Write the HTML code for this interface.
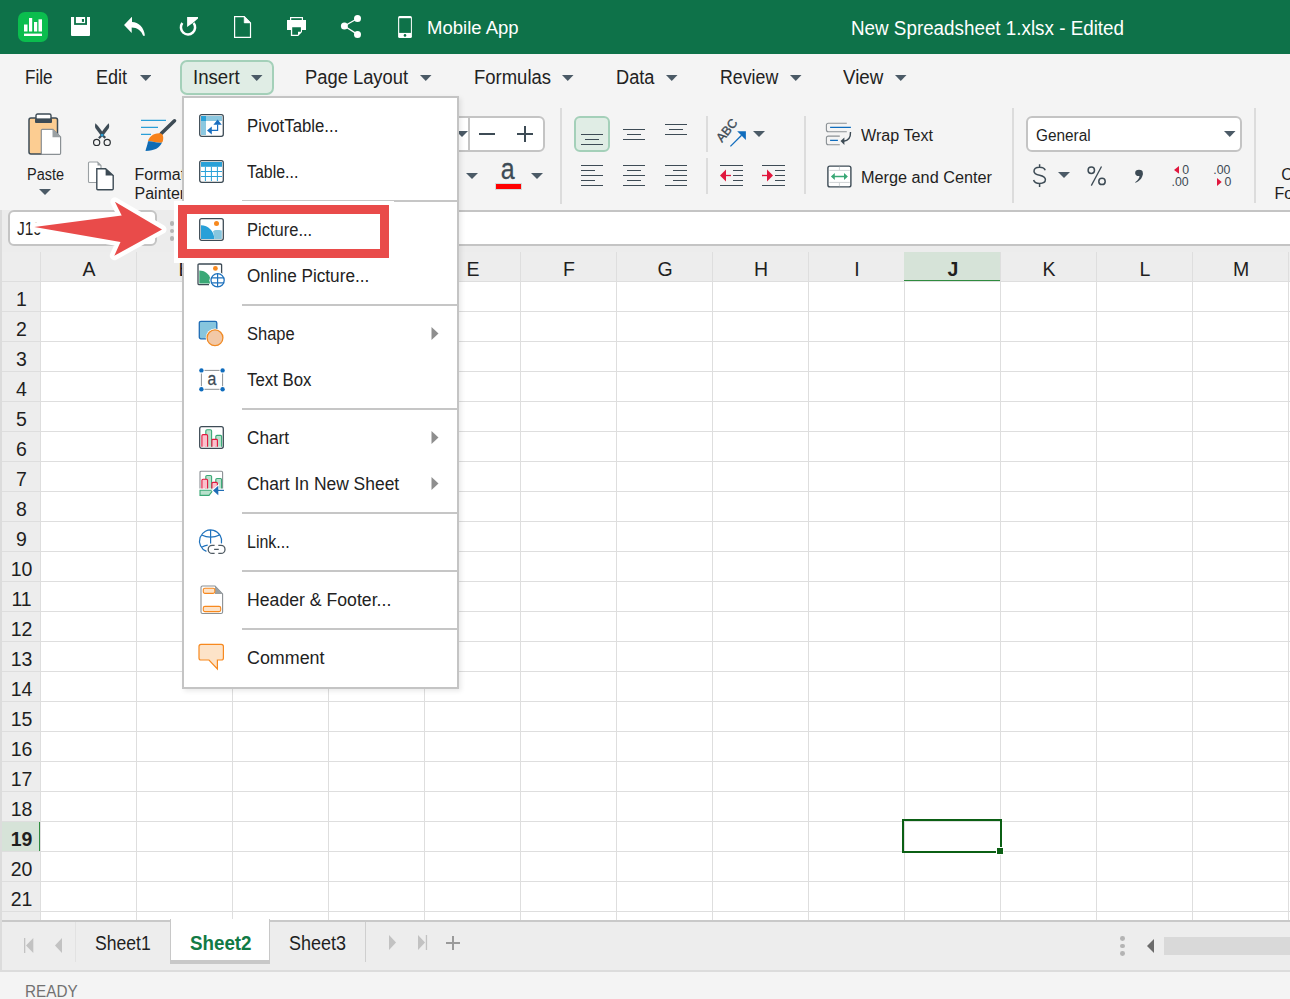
<!DOCTYPE html>
<html><head><meta charset="utf-8">
<style>
*{margin:0;padding:0;box-sizing:border-box}
html,body{width:1290px;height:999px;overflow:hidden;background:#f4f4f4;font-family:"Liberation Sans",sans-serif;color:#262626}
.a{position:absolute;display:block}
.t{position:absolute;white-space:nowrap;line-height:1;}
</style></head><body>
<div class="a" style="left:0px;top:0px;width:1290px;height:54px;background:#0e7249"></div>
<svg class="a" style="left:18px;top:12px;" width="30" height="30" viewBox="0 0 30 30"><rect x="0" y="0" width="30" height="30" rx="7" fill="#0bbd4e"/><rect x="6" y="12.5" width="3.5" height="7" fill="#fff"/><rect x="11" y="6" width="3.2" height="13.5" fill="#fff"/><rect x="16" y="10" width="3.2" height="9.5" fill="#fff"/><rect x="20.5" y="7.3" width="3.5" height="12.2" fill="#fff"/><rect x="6" y="21.6" width="18" height="2.4" fill="#fff"/></svg>
<svg class="a" style="left:71px;top:17px;" width="19" height="19" viewBox="0 0 19 19"><path d="M0 0H19V18Q19 19 18 19H1Q0 19 0 18Z" fill="#fff"/><rect x="3.1" y="0" width="12.9" height="7.9" fill="#0e7249"/><rect x="4.9" y="0" width="9.2" height="6.1" fill="#fff"/><rect x="10.9" y="2" width="2.1" height="2.9" fill="#0e7249"/></svg>
<svg class="a" style="left:120px;top:12px;" width="30" height="30" viewBox="0 0 30 30"><path d="M11.7 5L4.05 13.1L11.7 20.9V15.6C17 15.6 21.5 19 23.1 23.7H24.9C24.3 15.5 18.5 10 12 9.9V5Z" fill="#fff"/></svg>
<svg class="a" style="left:178px;top:16px;" width="21" height="21" viewBox="0 0 21 21"><path d="M4.33 7.03A7.1 7.1 0 1 0 15.62 6.97" fill="none" stroke="#fff" stroke-width="2.5"/><path d="M9.1 1.1H20V2.5L14.8 7L9.1 10.9Z" fill="#fff"/></svg>
<svg class="a" style="left:233px;top:15px;" width="19" height="23" viewBox="0 0 19 23"><path d="M1.6 1.6H11.2L17.5 7.9V22.4H1.6Z" fill="none" stroke="#fff" stroke-width="1.2"/><path d="M11.2 1.6V7.9H17.5Z" fill="#fff" stroke="#fff" stroke-width="0.6"/></svg>
<svg class="a" style="left:286px;top:16px;" width="21" height="21" viewBox="0 0 21 21"><rect x="4" y="1" width="13" height="3.2" fill="#fff"/><rect x="5.2" y="2.2" width="10.6" height="2" fill="#0e7249"/><rect x="1" y="4" width="19" height="10" fill="#fff"/><path d="M4.9 11H16V16L12.2 20H4.9Z" fill="#fff"/><path d="M6.2 11.2H14.9V15.8H12V18.8H6.2Z" fill="#0e7249"/></svg>
<svg class="a" style="left:340px;top:15px;" width="22" height="23" viewBox="0 0 22 23"><path d="M17.5 3.5L4.4 11L17.5 19.4" fill="none" stroke="#fff" stroke-width="1.3"/><circle cx="17.5" cy="3.5" r="3.5" fill="#fff"/><circle cx="4.4" cy="11" r="3.5" fill="#fff"/><circle cx="17.5" cy="19.4" r="3.5" fill="#fff"/></svg>
<svg class="a" style="left:397px;top:16px;" width="16" height="22" viewBox="0 0 16 22"><path d="M2.6 0H13.4Q14.9 0 14.9 1.5V20.5Q14.9 22 13.4 22H2.6Q1.1 22 1.1 20.5V1.5Q1.1 0 2.6 0Z" fill="#fff"/><rect x="2.2" y="2.2" width="11.7" height="14.7" fill="#0e7249"/><circle cx="8" cy="19.4" r="1.3" fill="#0e7249"/></svg>
<div class="t" style="left:426.8px;top:20.00px;font-size:17.5px;color:#fff;transform:scaleX(1.0579);transform-origin:0 0;">Mobile App</div>
<div class="t" style="left:851.4px;top:19.00px;font-size:19.5px;color:#fff;transform:scaleX(0.9650);transform-origin:0 0;">New Spreadsheet 1.xlsx - Edited</div>
<div class="a" style="left:180px;top:60px;width:94px;height:35px;background:#e0ede5;border:2px solid #a4d0b9;border-radius:7px"></div>
<div class="t" style="left:25.2px;top:67.00px;font-size:20px;color:#222;transform:scaleX(0.8564);transform-origin:0 0;">File</div>
<div class="t" style="left:96.3px;top:67.00px;font-size:20px;color:#222;transform:scaleX(0.8995);transform-origin:0 0;">Edit</div>
<svg class="a" style="left:139.55px;top:75px;" width="11.5" height="6" viewBox="0 0 11.5 6"><path d="M0 0H11.5L5.75 6Z" fill="#4b5a66"/></svg>
<div class="t" style="left:193.3px;top:67.00px;font-size:20px;color:#222;transform:scaleX(0.9316);transform-origin:0 0;">Insert</div>
<svg class="a" style="left:251.25px;top:75px;" width="11.5" height="6" viewBox="0 0 11.5 6"><path d="M0 0H11.5L5.75 6Z" fill="#4b5a66"/></svg>
<div class="t" style="left:305.2px;top:67.00px;font-size:20px;color:#222;transform:scaleX(0.9170);transform-origin:0 0;">Page Layout</div>
<svg class="a" style="left:420.05px;top:75px;" width="11.5" height="6" viewBox="0 0 11.5 6"><path d="M0 0H11.5L5.75 6Z" fill="#4b5a66"/></svg>
<div class="t" style="left:474px;top:67.00px;font-size:20px;color:#222;transform:scaleX(0.9238);transform-origin:0 0;">Formulas</div>
<svg class="a" style="left:562.45px;top:75px;" width="11.5" height="6" viewBox="0 0 11.5 6"><path d="M0 0H11.5L5.75 6Z" fill="#4b5a66"/></svg>
<div class="t" style="left:616px;top:67.00px;font-size:20px;color:#222;transform:scaleX(0.9089);transform-origin:0 0;">Data</div>
<svg class="a" style="left:666.05px;top:75px;" width="11.5" height="6" viewBox="0 0 11.5 6"><path d="M0 0H11.5L5.75 6Z" fill="#4b5a66"/></svg>
<div class="t" style="left:720.3px;top:67.00px;font-size:20px;color:#222;transform:scaleX(0.8875);transform-origin:0 0;">Review</div>
<svg class="a" style="left:790.15px;top:75px;" width="11.5" height="6" viewBox="0 0 11.5 6"><path d="M0 0H11.5L5.75 6Z" fill="#4b5a66"/></svg>
<div class="t" style="left:843.4px;top:67.00px;font-size:20px;color:#222;transform:scaleX(0.9374);transform-origin:0 0;">View</div>
<svg class="a" style="left:895.45px;top:75px;" width="11.5" height="6" viewBox="0 0 11.5 6"><path d="M0 0H11.5L5.75 6Z" fill="#4b5a66"/></svg>
<!--RIBBON-->
<svg class="a" style="left:28px;top:113px;" width="35" height="43" viewBox="0 0 35 43"><rect x="1" y="5" width="28.5" height="36" rx="2" fill="#fccd92" stroke="#3d4b55" stroke-width="1.5"/><rect x="8" y="1" width="15" height="5.5" rx="1.6" fill="#fff" stroke="#3d4b55" stroke-width="1.4"/><rect x="7" y="5.5" width="17" height="4.5" rx="1" fill="#3d4b55"/><path d="M14.3 16.3Q13.3 16.3 13.3 17.3V40.2Q13.3 41.3 14.3 41.3H31.6Q32.6 41.3 32.6 40.2V24L24.9 16.3Z" fill="#fff" stroke="#8a9094" stroke-width="1.2"/><path d="M24.5 16.3V24.3H32.6Z" fill="#9aa0a3"/></svg>
<div class="t" style="left:27px;top:167.00px;font-size:16px;color:#1f1f1f;transform:scaleX(0.9043);transform-origin:0 0;">Paste</div>
<svg class="a" style="left:39.0px;top:189px;" width="12" height="6" viewBox="0 0 12 6"><path d="M0 0H12L6.0 6Z" fill="#4b5a66"/></svg>
<svg class="a" style="left:92px;top:122px;" width="20" height="25" viewBox="0 0 20 25"><path d="M3.3 1.2Q5.5 2.5 11.5 11.5L9.2 14L3.3 6Q2.8 3.5 3.3 1.2Z" fill="#3d4b55"/><path d="M16.9 1.2Q14.7 2.5 8.7 11.5L11 14L16.9 6Q17.4 3.5 16.9 1.2Z" fill="#3d4b55"/><path d="M10.1 13L6.9 16.3M10.1 13L13.3 15.9" stroke="#3d4b55" stroke-width="2.2"/><circle cx="4.65" cy="20.4" r="3.1" fill="none" stroke="#2a2f33" stroke-width="1.2"/><circle cx="15.2" cy="20.4" r="3.1" fill="none" stroke="#2a2f33" stroke-width="1.2"/><rect x="8.8" y="11.9" width="2.6" height="2.4" fill="#2a9fd8"/></svg>
<svg class="a" style="left:87px;top:160.5px;" width="28" height="30" viewBox="0 0 28 30"><path d="M2.5 1H10.5L14 4.5V21.5H2.5Q1.5 21.5 1.5 20.5V2Q1.5 1 2.5 1Z" fill="#fff" stroke="#9aa0a3" stroke-width="1.1"/><path d="M10.5 1V4.5H14Z" fill="#9aa0a3"/><path d="M9.8 7.8H18.6L26.2 14.6V27.8Q26.2 28.8 25.2 28.8H10.8Q9.8 28.8 9.8 27.8Z" fill="#fff" stroke="#3d4b55" stroke-width="1.4"/><path d="M18.6 7.8V14.6H26.2Z" fill="#3d4b55"/></svg>
<svg class="a" style="left:140px;top:118px;" width="38" height="36" viewBox="0 0 38 36"><path d="M1 2.3H26M1 9.3H18M1 16.3H11" stroke="#2a9fd8" stroke-width="1.2"/><path d="M34.5 2.8L21.3 15.5" stroke="#3d4b55" stroke-width="3.6" stroke-linecap="round"/><path d="M20.2 15.2C24.5 15.5 23.5 23.5 22 24.5C17 25.5 11 22.5 8 23.5C8.5 19.5 13 14.8 20.2 15.2Z" fill="#f7821b"/><path d="M8 23.5C11 22.5 17 25.5 22 24.5C19.5 30 15 32.5 5.5 33C6 30 7.5 27 8 23.5Z" fill="#0f6cb5"/></svg>
<div class="t" style="left:134.5px;top:167.00px;font-size:16px;color:#1f1f1f;">Format</div>
<div class="t" style="left:134.5px;top:186.00px;font-size:16px;color:#1f1f1f;">Painter</div>
<div class="a" style="left:440px;top:116px;width:105px;height:36px;background:#fff;border:2px solid #c4c4c4;border-radius:6px"></div>
<div class="a" style="left:468.0px;top:118px;width:2px;height:32px;background:#c4c4c4"></div>
<svg class="a" style="left:456.0px;top:131px;" width="12" height="6" viewBox="0 0 12 6"><path d="M0 0H12L6.0 6Z" fill="#4b5a66"/></svg>
<div class="a" style="left:479px;top:132.9px;width:16px;height:1.7px;background:#3d4b55"></div>
<div class="a" style="left:517px;top:132.9px;width:16px;height:1.7px;background:#3d4b55"></div>
<div class="a" style="left:524.2px;top:126px;width:1.7px;height:16px;background:#3d4b55"></div>
<svg class="a" style="left:466.0px;top:173px;" width="12" height="6" viewBox="0 0 12 6"><path d="M0 0H12L6.0 6Z" fill="#4b5a66"/></svg>
<svg class="a" style="left:498px;top:158px;" width="22" height="23" viewBox="0 0 22 23"><text x="3.2" y="20.8" font-family="Liberation Sans" font-size="29" transform="scale(0.86 1)" fill="#3d4b55" stroke="#3d4b55" stroke-width="0.3">a</text></svg>
<div class="a" style="left:495px;top:183px;width:27px;height:7px;background:#ff0000;border:1px solid #d3dada"></div>
<svg class="a" style="left:531.0px;top:173px;" width="12" height="6" viewBox="0 0 12 6"><path d="M0 0H12L6.0 6Z" fill="#4b5a66"/></svg>
<div class="a" style="left:560.0px;top:108px;width:2px;height:96px;background:#dcdcdc"></div>
<div class="a" style="left:574px;top:116px;width:36px;height:36px;background:#e0ede5;border:2px solid #a4d0b9;border-radius:6px"></div>
<div class="a" style="left:581px;top:133.70000000000002px;width:22px;height:1.3px;background:#3d4b55"></div>
<div class="a" style="left:585px;top:138.8px;width:14px;height:1.3px;background:#3d4b55"></div>
<div class="a" style="left:581px;top:143.8px;width:22px;height:1.3px;background:#3d4b55"></div>
<div class="a" style="left:623px;top:128.8px;width:22px;height:1.3px;background:#3d4b55"></div>
<div class="a" style="left:627px;top:133.8px;width:14px;height:1.3px;background:#3d4b55"></div>
<div class="a" style="left:623px;top:138.8px;width:22px;height:1.3px;background:#3d4b55"></div>
<div class="a" style="left:665px;top:123.7px;width:22px;height:1.3px;background:#3d4b55"></div>
<div class="a" style="left:669px;top:128.8px;width:14px;height:1.3px;background:#3d4b55"></div>
<div class="a" style="left:665px;top:133.8px;width:22px;height:1.3px;background:#3d4b55"></div>
<div class="a" style="left:581px;top:164.70000000000002px;width:22px;height:1.3px;background:#3d4b55"></div>
<div class="a" style="left:581px;top:169.70000000000002px;width:14px;height:1.3px;background:#3d4b55"></div>
<div class="a" style="left:581px;top:174.70000000000002px;width:22px;height:1.3px;background:#3d4b55"></div>
<div class="a" style="left:581px;top:179.70000000000002px;width:14px;height:1.3px;background:#3d4b55"></div>
<div class="a" style="left:581px;top:184.70000000000002px;width:22px;height:1.3px;background:#3d4b55"></div>
<div class="a" style="left:623px;top:164.70000000000002px;width:22px;height:1.3px;background:#3d4b55"></div>
<div class="a" style="left:627px;top:169.70000000000002px;width:14px;height:1.3px;background:#3d4b55"></div>
<div class="a" style="left:623px;top:174.70000000000002px;width:22px;height:1.3px;background:#3d4b55"></div>
<div class="a" style="left:627px;top:179.70000000000002px;width:14px;height:1.3px;background:#3d4b55"></div>
<div class="a" style="left:623px;top:184.70000000000002px;width:22px;height:1.3px;background:#3d4b55"></div>
<div class="a" style="left:665px;top:164.70000000000002px;width:22px;height:1.3px;background:#3d4b55"></div>
<div class="a" style="left:673px;top:169.70000000000002px;width:14px;height:1.3px;background:#3d4b55"></div>
<div class="a" style="left:665px;top:174.70000000000002px;width:22px;height:1.3px;background:#3d4b55"></div>
<div class="a" style="left:673px;top:179.70000000000002px;width:14px;height:1.3px;background:#3d4b55"></div>
<div class="a" style="left:665px;top:184.70000000000002px;width:22px;height:1.3px;background:#3d4b55"></div>
<div class="a" style="left:706.0px;top:116px;width:2px;height:35.5px;background:#dcdcdc"></div>
<div class="a" style="left:706.0px;top:158px;width:2px;height:35.5px;background:#dcdcdc"></div>
<svg class="a" style="left:715px;top:117px;" width="34" height="32" viewBox="0 0 34 32"><text x="0" y="0" transform="translate(6.9 26) rotate(-51)" font-family="Liberation Sans" font-size="12.5" fill="#3d4b55" stroke="#3d4b55" stroke-width="0.35">ABC</text><path d="M15.4 29.4L26.6 18.2" stroke="#0f6cbd" stroke-width="1.3"/><path d="M22.2 14.3H30.9V22.9Z" fill="#0f6cbd"/></svg>
<svg class="a" style="left:753.0px;top:131px;" width="12" height="6" viewBox="0 0 12 6"><path d="M0 0H12L6.0 6Z" fill="#4b5a66"/></svg>
<div class="a" style="left:720px;top:164.7px;width:23px;height:1.3px;background:#3d4b55"></div>
<div class="a" style="left:720px;top:184.7px;width:23px;height:1.3px;background:#3d4b55"></div>
<div class="a" style="left:733px;top:169.7px;width:10px;height:1.3px;background:#3d4b55"></div>
<div class="a" style="left:733px;top:174.7px;width:10px;height:1.3px;background:#3d4b55"></div>
<div class="a" style="left:733px;top:179.7px;width:10px;height:1.3px;background:#3d4b55"></div>
<svg class="a" style="left:720px;top:169px;" width="12" height="13" viewBox="0 0 12 13"><path d="M0 6.5L6 0.5V12.5Z" fill="#e0173d"/><path d="M5 6.5H11" stroke="#e0173d" stroke-width="1.3"/></svg>
<div class="a" style="left:762px;top:164.7px;width:23px;height:1.3px;background:#3d4b55"></div>
<div class="a" style="left:762px;top:184.7px;width:23px;height:1.3px;background:#3d4b55"></div>
<div class="a" style="left:775px;top:169.7px;width:10px;height:1.3px;background:#3d4b55"></div>
<div class="a" style="left:775px;top:174.7px;width:10px;height:1.3px;background:#3d4b55"></div>
<div class="a" style="left:775px;top:179.7px;width:10px;height:1.3px;background:#3d4b55"></div>
<svg class="a" style="left:762px;top:169px;" width="12" height="13" viewBox="0 0 12 13"><path d="M11 6.5L5 0.5V12.5Z" fill="#e0173d"/><path d="M0 6.5H6" stroke="#e0173d" stroke-width="1.3"/></svg>
<div class="a" style="left:804.0px;top:116px;width:2px;height:77.5px;background:#dcdcdc"></div>
<svg class="a" style="left:825px;top:122px;" width="28" height="25" viewBox="0 0 28 25"><path d="M21.8 1.2H3.4Q1.4 1.2 1.4 3.2V7.7Q1.4 9.7 3.4 9.7H21.8" fill="none" stroke="#8a9094" stroke-width="1.1"/><path d="M14.8 14.1H3.4Q1.4 14.1 1.4 16.1V20.7Q1.4 22.7 3.4 22.7H14.8" fill="none" stroke="#8a9094" stroke-width="1.1"/><path d="M5.1 5.4H25.9M5.1 18.4H12.9" stroke="#0f6cbd" stroke-width="1.3"/><path d="M25.5 10.1Q25.8 18.8 18.5 19.3" fill="none" stroke="#3d4b55" stroke-width="1.4"/><path d="M15.5 19L19.4 15.4V22.9Z" fill="#3d4b55"/></svg>
<div class="t" style="left:860.7px;top:128.00px;font-size:16px;color:#1f1f1f;transform:scaleX(1.0079);transform-origin:0 0;">Wrap Text</div>
<svg class="a" style="left:826px;top:164px;" width="27" height="25" viewBox="0 0 27 25"><rect x="1.9" y="2.1" width="23" height="20.8" rx="2" fill="#fff" stroke="#3d4b55" stroke-width="1.4"/><path d="M3.4 6.4H23.8M3.4 18.4H23.8M13.4 2.8V6.4M13.4 18.4V22.2" stroke="#cfd3d5" stroke-width="1"/><path d="M7 12.5H20" stroke="#3aa876" stroke-width="1.5"/><path d="M4.9 12.5L8.8 9V16Z M21.9 12.5L18 9V16Z" fill="#3aa876"/></svg>
<div class="t" style="left:860.7px;top:170.00px;font-size:16px;color:#1f1f1f;transform:scaleX(1.0158);transform-origin:0 0;">Merge and Center</div>
<div class="a" style="left:1012.0px;top:108px;width:2px;height:95px;background:#dcdcdc"></div>
<div class="a" style="left:1026px;top:116px;width:216px;height:36px;background:#fff;border:2px solid #c4c4c4;border-radius:6px"></div>
<div class="t" style="left:1035.6px;top:128.00px;font-size:16px;color:#1f1f1f;transform:scaleX(0.9609);transform-origin:0 0;">General</div>
<svg class="a" style="left:1224.25px;top:131px;" width="11.5" height="6" viewBox="0 0 11.5 6"><path d="M0 0H11.5L5.75 6Z" fill="#4b5a66"/></svg>
<svg class="a" style="left:1030px;top:162px;" width="20" height="27" viewBox="0 0 20 27"><path d="M15.2 8.2C14.5 6 12.5 5.2 9.6 5.2C6.5 5.2 4 6.6 4 9.2C4 12 6.8 12.6 9.6 13.2C12.8 13.9 15.4 14.7 15.4 17.6C15.4 20.2 12.8 21.5 9.6 21.5C6.5 21.5 4.3 20.3 3.6 18M9.6 2.2V5.2M9.6 21.5V25" fill="none" stroke="#3d4b55" stroke-width="1.5"/></svg>
<svg class="a" style="left:1058.0px;top:172px;" width="12" height="6" viewBox="0 0 12 6"><path d="M0 0H12L6.0 6Z" fill="#4b5a66"/></svg>
<svg class="a" style="left:1085px;top:163px;" width="24" height="25" viewBox="0 0 24 25"><circle cx="6.3" cy="7.2" r="3.2" fill="none" stroke="#3d4b55" stroke-width="1.5"/><circle cx="17" cy="18.4" r="3.2" fill="none" stroke="#3d4b55" stroke-width="1.5"/><path d="M16.5 3.5L6.3 22.6" stroke="#3d4b55" stroke-width="1.3"/></svg>
<svg class="a" style="left:1132px;top:168px;" width="14" height="17" viewBox="0 0 14 17"><ellipse cx="7" cy="4.9" rx="3.85" ry="3.1" fill="#3d4b55"/><path d="M10.8 5C11 9 8.5 12.8 3.5 14.8L3.1 14.2C6 12.2 7.5 10 7.5 7.7Z" fill="#3d4b55"/></svg>
<svg class="a" style="left:1170px;top:162px;" width="24" height="28" viewBox="0 0 24 28"><path d="M4 7.9L9 4.1V11.7Z" fill="#e0173d"/><text x="12.8" y="12" font-family="Liberation Sans" font-size="13" fill="#3d4b55" transform="scale(0.95 1)" >0</text><text x="1.6" y="24" font-family="Liberation Sans" font-size="13" fill="#3d4b55" transform="scale(0.95 1)">.00</text></svg>
<svg class="a" style="left:1212px;top:162px;" width="24" height="28" viewBox="0 0 24 28"><text x="1.4" y="12" font-family="Liberation Sans" font-size="13" fill="#3d4b55" transform="scale(0.95 1)">.00</text><path d="M9.7 20L5 16V24Z" fill="#e0173d"/><text x="13.2" y="24" font-family="Liberation Sans" font-size="13" fill="#3d4b55" transform="scale(0.95 1)">0</text></svg>
<div class="a" style="left:1254.0px;top:108px;width:2px;height:95px;background:#dcdcdc"></div>
<div class="t" style="left:1281.3px;top:167.00px;font-size:16px;color:#1f1f1f;">Co</div>
<div class="t" style="left:1274.4px;top:186.00px;font-size:16px;color:#1f1f1f;">Fo</div>
<!--FORMULA BAR-->
<div class="a" style="left:0px;top:210px;width:1290px;height:42px;background:#ececec"></div>
<div class="a" style="left:183px;top:210px;width:1107px;height:36px;background:#fff;border-top:2px solid #c4c4c4;border-bottom:2px solid #c4c4c4"></div>
<div class="a" style="left:8px;top:210px;width:149px;height:36px;background:#fff;border:2px solid #c4c4c4;border-radius:6px"></div>
<div class="t" style="left:16.5px;top:220.00px;font-size:18px;color:#1f1f1f;transform:scaleX(0.8600);transform-origin:0 0;">J19</div>
<div class="a" style="left:170px;top:221.2px;width:4.4px;height:4.4px;border-radius:50%;background:#b4b4b4"></div>
<div class="a" style="left:170px;top:228.6px;width:4.4px;height:4.4px;border-radius:50%;background:#b4b4b4"></div>
<div class="a" style="left:170px;top:236.2px;width:4.4px;height:4.4px;border-radius:50%;background:#b4b4b4"></div>
<!--GRID-->
<div class="a" style="left:0px;top:252px;width:1290px;height:668px;background:#fff"></div>
<div class="a" style="left:0px;top:252px;width:1290px;height:30px;background:#ededed"></div>
<div class="a" style="left:2px;top:282px;width:38px;height:638px;background:#ededed"></div>
<div class="a" style="left:0px;top:210px;width:2px;height:761px;background:#dcdcdc"></div>
<svg class="a" style="left:0px;top:252px;" width="1290" height="668" viewBox="0 0 1290 668"><rect x="40" y="0" width="1" height="668" fill="#dedede"/><rect x="136" y="0" width="1" height="668" fill="#dedede"/><rect x="232" y="0" width="1" height="668" fill="#dedede"/><rect x="328" y="0" width="1" height="668" fill="#dedede"/><rect x="424" y="0" width="1" height="668" fill="#dedede"/><rect x="520" y="0" width="1" height="668" fill="#dedede"/><rect x="616" y="0" width="1" height="668" fill="#dedede"/><rect x="712" y="0" width="1" height="668" fill="#dedede"/><rect x="808" y="0" width="1" height="668" fill="#dedede"/><rect x="904" y="0" width="1" height="668" fill="#dedede"/><rect x="1000" y="0" width="1" height="668" fill="#dedede"/><rect x="1096" y="0" width="1" height="668" fill="#dedede"/><rect x="1192" y="0" width="1" height="668" fill="#dedede"/><rect x="1288" y="0" width="1" height="668" fill="#dedede"/><rect x="2" y="29" width="1288" height="1" fill="#dedede"/><rect x="2" y="59" width="1288" height="1" fill="#dedede"/><rect x="2" y="89" width="1288" height="1" fill="#dedede"/><rect x="2" y="119" width="1288" height="1" fill="#dedede"/><rect x="2" y="149" width="1288" height="1" fill="#dedede"/><rect x="2" y="179" width="1288" height="1" fill="#dedede"/><rect x="2" y="209" width="1288" height="1" fill="#dedede"/><rect x="2" y="239" width="1288" height="1" fill="#dedede"/><rect x="2" y="269" width="1288" height="1" fill="#dedede"/><rect x="2" y="299" width="1288" height="1" fill="#dedede"/><rect x="2" y="329" width="1288" height="1" fill="#dedede"/><rect x="2" y="359" width="1288" height="1" fill="#dedede"/><rect x="2" y="389" width="1288" height="1" fill="#dedede"/><rect x="2" y="419" width="1288" height="1" fill="#dedede"/><rect x="2" y="449" width="1288" height="1" fill="#dedede"/><rect x="2" y="479" width="1288" height="1" fill="#dedede"/><rect x="2" y="509" width="1288" height="1" fill="#dedede"/><rect x="2" y="539" width="1288" height="1" fill="#dedede"/><rect x="2" y="569" width="1288" height="1" fill="#dedede"/><rect x="2" y="599" width="1288" height="1" fill="#dedede"/><rect x="2" y="629" width="1288" height="1" fill="#dedede"/><rect x="2" y="659" width="1288" height="1" fill="#dedede"/></svg>
<div class="a" style="left:904px;top:252px;width:96px;height:29px;background:#d6e3d8;border-bottom:1.3px solid #2f8b3f"></div>
<div class="a" style="left:2px;top:822px;width:37px;height:29px;background:#d6e3d8"></div>
<div class="a" style="left:39px;top:822px;width:1.3px;height:29px;background:#2f8b3f"></div>
<div class="t" style="left:82.4964453125px;top:260.00px;font-size:19.5px;color:#1f1f1f;">A</div>
<div class="t" style="left:178.4964453125px;top:260.00px;font-size:19.5px;color:#1f1f1f;">B</div>
<div class="t" style="left:273.958671875px;top:260.00px;font-size:19.5px;color:#1f1f1f;">C</div>
<div class="t" style="left:369.958671875px;top:260.00px;font-size:19.5px;color:#1f1f1f;">D</div>
<div class="t" style="left:466.4964453125px;top:260.00px;font-size:19.5px;color:#1f1f1f;">E</div>
<div class="t" style="left:563.04412109375px;top:260.00px;font-size:19.5px;color:#1f1f1f;">F</div>
<div class="t" style="left:657.416328125px;top:260.00px;font-size:19.5px;color:#1f1f1f;">G</div>
<div class="t" style="left:753.958671875px;top:260.00px;font-size:19.5px;color:#1f1f1f;">H</div>
<div class="t" style="left:854.291328125px;top:260.00px;font-size:19.5px;color:#1f1f1f;">I</div>
<div class="t" style="left:947.57732421875px;top:260.00px;font-size:19.5px;color:#1f1f1f;font-weight:bold;">J</div>
<div class="t" style="left:1042.4964453125px;top:260.00px;font-size:19.5px;color:#1f1f1f;">K</div>
<div class="t" style="left:1139.57732421875px;top:260.00px;font-size:19.5px;color:#1f1f1f;">L</div>
<div class="t" style="left:1232.87779296875px;top:260.00px;font-size:19.5px;color:#1f1f1f;">M</div>
<div class="t" style="left:16.07732421875px;top:290.00px;font-size:19.5px;color:#1f1f1f;">1</div>
<div class="t" style="left:16.07732421875px;top:320.00px;font-size:19.5px;color:#1f1f1f;">2</div>
<div class="t" style="left:16.07732421875px;top:350.00px;font-size:19.5px;color:#1f1f1f;">3</div>
<div class="t" style="left:16.07732421875px;top:380.00px;font-size:19.5px;color:#1f1f1f;">4</div>
<div class="t" style="left:16.07732421875px;top:410.00px;font-size:19.5px;color:#1f1f1f;">5</div>
<div class="t" style="left:16.07732421875px;top:440.00px;font-size:19.5px;color:#1f1f1f;">6</div>
<div class="t" style="left:16.07732421875px;top:470.00px;font-size:19.5px;color:#1f1f1f;">7</div>
<div class="t" style="left:16.07732421875px;top:500.00px;font-size:19.5px;color:#1f1f1f;">8</div>
<div class="t" style="left:16.07732421875px;top:530.00px;font-size:19.5px;color:#1f1f1f;">9</div>
<div class="t" style="left:10.6546484375px;top:560.00px;font-size:19.5px;color:#1f1f1f;">10</div>
<div class="t" style="left:11.37828125px;top:590.00px;font-size:19.5px;color:#1f1f1f;">11</div>
<div class="t" style="left:10.6546484375px;top:620.00px;font-size:19.5px;color:#1f1f1f;">12</div>
<div class="t" style="left:10.6546484375px;top:650.00px;font-size:19.5px;color:#1f1f1f;">13</div>
<div class="t" style="left:10.6546484375px;top:680.00px;font-size:19.5px;color:#1f1f1f;">14</div>
<div class="t" style="left:10.6546484375px;top:710.00px;font-size:19.5px;color:#1f1f1f;">15</div>
<div class="t" style="left:10.6546484375px;top:740.00px;font-size:19.5px;color:#1f1f1f;">16</div>
<div class="t" style="left:10.6546484375px;top:770.00px;font-size:19.5px;color:#1f1f1f;">17</div>
<div class="t" style="left:10.6546484375px;top:800.00px;font-size:19.5px;color:#1f1f1f;">18</div>
<div class="t" style="left:10.6546484375px;top:830.00px;font-size:19.5px;color:#1f1f1f;font-weight:bold;">19</div>
<div class="t" style="left:10.6546484375px;top:860.00px;font-size:19.5px;color:#1f1f1f;">20</div>
<div class="t" style="left:10.6546484375px;top:890.00px;font-size:19.5px;color:#1f1f1f;">21</div>
<div class="a" style="left:902px;top:819px;width:100px;height:34px;border:2px solid #0b5f14"></div>
<div class="a" style="left:995.7px;top:846.8px;width:8px;height:8px;background:#fff"></div>
<div class="a" style="left:997px;top:848px;width:6px;height:6px;background:#0b5f14"></div>
<!--TABS-->
<div class="a" style="left:0px;top:920px;width:1290px;height:52px;background:#ededed;border-top:2px solid #c9c9c9;border-bottom:2px solid #dcdcdc"></div>
<div class="a" style="left:0px;top:920px;width:2px;height:51px;background:#dcdcdc"></div>
<svg class="a" style="left:24px;top:938px;" width="11" height="15" viewBox="0 0 11 15"><rect x="0" y="0" width="1.3" height="15" fill="#c2c2c2"/><path d="M2 7.5L9.3 0V15Z" fill="#c2c2c2"/></svg>
<svg class="a" style="left:55px;top:938px;" width="8" height="15" viewBox="0 0 8 15"><path d="M0 7.5L7 0V15Z" fill="#c2c2c2"/></svg>
<div class="a" style="left:74.5px;top:922px;width:1px;height:40px;background:#e2e2e2"></div>
<div class="t" style="left:94.9px;top:934.00px;font-size:19.5px;color:#1f1f1f;transform:scaleX(0.9028);transform-origin:0 0;">Sheet1</div>
<div class="a" style="left:170px;top:919px;width:100px;height:45px;background:#fff;border-left:1.5px solid #c8c8c8;border-right:1.5px solid #c8c8c8;border-bottom:4px solid #c8c8c8"></div>
<div class="t" style="left:189.8px;top:934.00px;font-size:19.5px;color:#117a45;font-weight:bold;transform:scaleX(0.9617);transform-origin:0 0;">Sheet2</div>
<div class="t" style="left:289px;top:934.00px;font-size:19.5px;color:#1f1f1f;transform:scaleX(0.9222);transform-origin:0 0;">Sheet3</div>
<div class="a" style="left:365.0px;top:922px;width:1px;height:40px;background:#cfcfcf"></div>
<svg class="a" style="left:389px;top:935px;" width="8" height="15" viewBox="0 0 8 15"><path d="M7 7.5L0 0V15Z" fill="#c2c2c2"/></svg>
<svg class="a" style="left:418px;top:935px;" width="10" height="15" viewBox="0 0 10 15"><path d="M7 7.5L0 0V15Z" fill="#c2c2c2"/><rect x="7.8" y="0" width="1.3" height="15" fill="#c2c2c2"/></svg>
<div class="a" style="left:446px;top:942px;width:14px;height:2px;background:#9a9a9a"></div>
<div class="a" style="left:452px;top:936px;width:2px;height:14px;background:#9a9a9a"></div>
<div class="a" style="left:1120px;top:935.9px;width:4.8px;height:4.8px;border-radius:50%;background:#b4b4b4"></div>
<div class="a" style="left:1120px;top:943.5px;width:4.8px;height:4.8px;border-radius:50%;background:#b4b4b4"></div>
<div class="a" style="left:1120px;top:951.1px;width:4.8px;height:4.8px;border-radius:50%;background:#b4b4b4"></div>
<svg class="a" style="left:1147px;top:939px;" width="8" height="14" viewBox="0 0 8 14"><path d="M0 7L7 0V14Z" fill="#6b6b6b"/></svg>
<div class="a" style="left:1164px;top:937px;width:126px;height:18px;background:#d9d9d9"></div>
<div class="a" style="left:0px;top:972px;width:1290px;height:27px;background:#f4f4f4"></div>
<div class="t" style="left:24.8px;top:983.00px;font-size:17px;color:#717171;transform:scaleX(0.8997);transform-origin:0 0;">READY</div>
<!--MENU-->
<div class="a" style="left:182px;top:96px;width:277px;height:593px;background:#fff;border:2px solid #c4c4c4;box-shadow:2px 2px 5px rgba(0,0,0,0.09)"></div>
<div class="t" style="left:246.6px;top:118.00px;font-size:17.5px;color:#222;transform:scaleX(0.9577);transform-origin:0 0;">PivotTable...</div>
<div class="t" style="left:246.6px;top:164.00px;font-size:17.5px;color:#222;transform:scaleX(0.9092);transform-origin:0 0;">Table...</div>
<div class="t" style="left:246.6px;top:222.00px;font-size:17.5px;color:#222;transform:scaleX(0.9442);transform-origin:0 0;">Picture...</div>
<div class="t" style="left:246.6px;top:268.00px;font-size:17.5px;color:#222;transform:scaleX(0.9823);transform-origin:0 0;">Online Picture...</div>
<div class="t" style="left:246.6px;top:326.00px;font-size:17.5px;color:#222;transform:scaleX(0.9426);transform-origin:0 0;">Shape</div>
<div class="t" style="left:246.6px;top:372.00px;font-size:17.5px;color:#222;transform:scaleX(0.9611);transform-origin:0 0;">Text Box</div>
<div class="t" style="left:246.6px;top:430.00px;font-size:17.5px;color:#222;transform:scaleX(0.9814);transform-origin:0 0;">Chart</div>
<div class="t" style="left:246.6px;top:476.00px;font-size:17.5px;color:#222;transform:scaleX(0.9966);transform-origin:0 0;">Chart In New Sheet</div>
<div class="t" style="left:246.6px;top:534.00px;font-size:17.5px;color:#222;transform:scaleX(0.9146);transform-origin:0 0;">Link...</div>
<div class="t" style="left:246.6px;top:592.00px;font-size:17.5px;color:#222;transform:scaleX(1.0091);transform-origin:0 0;">Header &amp; Footer...</div>
<div class="t" style="left:246.6px;top:650.00px;font-size:17.5px;color:#222;transform:scaleX(1.0217);transform-origin:0 0;">Comment</div>
<div class="a" style="left:242px;top:200px;width:215px;height:2px;background:#c6c6c6"></div>
<div class="a" style="left:242px;top:304px;width:215px;height:2px;background:#c6c6c6"></div>
<div class="a" style="left:242px;top:408px;width:215px;height:2px;background:#c6c6c6"></div>
<div class="a" style="left:242px;top:512px;width:215px;height:2px;background:#c6c6c6"></div>
<div class="a" style="left:242px;top:570px;width:215px;height:2px;background:#c6c6c6"></div>
<div class="a" style="left:242px;top:628px;width:215px;height:2px;background:#c6c6c6"></div>
<svg class="a" style="left:431px;top:326.5px;" width="8" height="13" viewBox="0 0 8 13"><path d="M0.5 0L7.5 6.5L0.5 13Z" fill="#8e8e8e"/></svg>
<svg class="a" style="left:431px;top:430.5px;" width="8" height="13" viewBox="0 0 8 13"><path d="M0.5 0L7.5 6.5L0.5 13Z" fill="#8e8e8e"/></svg>
<svg class="a" style="left:431px;top:476.5px;" width="8" height="13" viewBox="0 0 8 13"><path d="M0.5 0L7.5 6.5L0.5 13Z" fill="#8e8e8e"/></svg>
<svg class="a" style="left:199px;top:114px;" width="25" height="23" viewBox="0 0 25 23"><rect x="0.7" y="0.7" width="23.6" height="21.6" rx="2" fill="#fff" stroke="#3d4b55" stroke-width="1.3"/><rect x="2" y="2" width="21" height="5" fill="#8cc8e0"/><rect x="2" y="2" width="5" height="19" fill="#8cc8e0"/><rect x="2" y="2" width="5" height="5" fill="#2aa1d8"/><path d="M18.6 5.5L22.8 10.8H14.4Z" fill="#1a6fc0"/><path d="M18.6 10.5V16.4H11.5" fill="none" stroke="#1a6fc0" stroke-width="1.2"/><path d="M8 16.4L12.8 12.4V20.4Z" fill="#1a6fc0"/></svg>
<svg class="a" style="left:199px;top:160px;" width="25" height="23" viewBox="0 0 25 23"><rect x="0.7" y="0.7" width="23.6" height="21.6" rx="2" fill="#fff" stroke="#3d4b55" stroke-width="1.3"/><rect x="2" y="2" width="21" height="4.8" fill="#2aa1d8"/><path d="M2 11.5H23M2 16.5H23M6.4 6.8V21M12.4 6.8V21M18.4 6.8V21" stroke="#2aa1d8" stroke-width="1"/></svg>
<svg class="a" style="left:199px;top:218px;" width="25" height="23" viewBox="0 0 25 23"><rect x="0.7" y="0.7" width="23.6" height="21.6" rx="2" fill="#fff" stroke="#3d4b55" stroke-width="1.3"/><path d="M2 7.2C9 7.2 15.5 13 15.2 21H2Z" fill="#28a0d8"/><path d="M14 13.5C15.5 11.8 18 11.8 22.8 12.5V21H15.2C15.2 18 14.8 15.5 14 13.5Z" fill="#88c6de"/><circle cx="17.5" cy="5.4" r="2.5" fill="#f7891f"/></svg>
<svg class="a" style="left:197px;top:262px;" width="30" height="28" viewBox="0 0 30 28"><path d="M19 2H2.2Q1 2 1 3.2V21.5Q1 22.7 2.2 22.7H12" fill="none" stroke="#3d4b55" stroke-width="1.3"/><path d="M24.6 12V3.2Q24.6 2 23.4 2H19" fill="none" stroke="#3d4b55" stroke-width="1.3"/><path d="M2.3 8.5C7.5 8.5 12 11.5 13.5 17V21.4H2.3Z" fill="#3aa876"/><circle cx="18.4" cy="6.4" r="2.4" fill="#f7891f"/><circle cx="20.6" cy="18.3" r="8.2" fill="#fff"/><circle cx="20.6" cy="18.3" r="6.6" fill="#fff" stroke="#1f72bd" stroke-width="1.3"/><path d="M14 15.8H27.2M14 20.8H27.2M20.6 11.7V24.9" stroke="#1f72bd" stroke-width="1.2"/></svg>
<svg class="a" style="left:198px;top:320px;" width="27" height="28" viewBox="0 0 27 28"><rect x="1.3" y="1.3" width="17.5" height="17.5" rx="1.6" fill="#86c5de" stroke="#1f6db5" stroke-width="1.3"/><circle cx="17" cy="17.8" r="9.3" fill="#fff"/><circle cx="17" cy="17.8" r="7.9" fill="#f2c8a6" stroke="#f08a24" stroke-width="1.3"/></svg>
<svg class="a" style="left:198px;top:367px;" width="28" height="26" viewBox="0 0 28 26"><path d="M6.5 3.4H21.5M6.5 22.3H21.5M3.4 6.5V19.2M24.6 6.5V19.2" stroke="#8a9094" stroke-width="1"/><circle cx="3.4" cy="3.4" r="2.2" fill="#0f6cbd"/><circle cx="24.6" cy="3.4" r="2.2" fill="#0f6cbd"/><circle cx="3.4" cy="22.3" r="2.2" fill="#0f6cbd"/><circle cx="24.6" cy="22.3" r="2.2" fill="#0f6cbd"/><text x="0" y="0" transform="translate(9.6 18) scale(0.86 1)" font-family="Liberation Sans" font-size="18.5" fill="#3d4b55" stroke="#3d4b55" stroke-width="0.25">a</text></svg>
<svg class="a" style="left:199px;top:426px;" width="25" height="23" viewBox="0 0 25 23"><rect x="0.7" y="0.7" width="23.6" height="21.6" rx="2" fill="#fff" stroke="#3d4b55" stroke-width="1.3"/><path d="M6.8 20.8V5Q6.8 3.7 8 3.7H11.4Q12.6 3.7 12.6 5V20.8" fill="#b9e0cc" stroke="#3aa876" stroke-width="1.1"/><path d="M16.8 20.8V10.5Q16.8 9.4 18 9.4H21.5Q22.6 9.4 22.6 10.5V20.8" fill="#b9e0cc" stroke="#3aa876" stroke-width="1.1"/><path d="M2.9 20.8V9.7Q2.9 8.6 4 8.6H7.5Q8.6 8.6 8.6 9.7V20.8" fill="#fbc0cc" stroke="#e0173d" stroke-width="1.1"/><path d="M12.9 20.8V14.3Q12.9 13.4 14 13.4H17.4Q18.4 13.4 18.4 14.3V20.8" fill="#fbc0cc" stroke="#e0173d" stroke-width="1.1"/></svg>
<svg class="a" style="left:199px;top:470px;" width="26" height="27" viewBox="0 0 26 27"><path d="M1 18.5V2.4Q1 1.2 2.2 1.2H22.4Q23.6 1.2 23.6 2.4V18.5" fill="#fff" stroke="#8a9094" stroke-width="1.1"/><path d="M6.8 18.5V6.6Q6.8 5.5 8 5.5H11.4Q12.6 5.5 12.6 6.6V18.5" fill="#b9e0cc" stroke="#3aa876" stroke-width="1.1"/><path d="M16.8 18.5V9.5Q16.8 8.5 18 8.5H21.5Q22.6 8.5 22.6 9.5V18.5" fill="#b9e0cc" stroke="#3aa876" stroke-width="1.1"/><path d="M2.9 18.5V10.2Q2.9 9.2 4 9.2H7.5Q8.6 9.2 8.6 10.2V18.5" fill="#fbc0cc" stroke="#e0173d" stroke-width="1.1"/><path d="M12.9 18.5V13.4Q12.9 12.4 14 12.4H17.4Q18.4 12.4 18.4 13.4V18.5" fill="#fbc0cc" stroke="#e0173d" stroke-width="1.1"/><path d="M1 20.2H14L10 25.4H1Z" fill="#b9e0cc" stroke="#3aa876" stroke-width="1.1"/><path d="M13.5 20.5L19.3 15.5V25.5Z" fill="#fff" stroke="#fff" stroke-width="1.5"/><path d="M14 20.5L19.3 15.8V25.2Z" fill="#1f6db5"/><path d="M18 20.4H25" stroke="#1f6db5" stroke-width="1.2"/></svg>
<svg class="a" style="left:198px;top:528px;" width="28" height="28" viewBox="0 0 28 28"><path d="M8.44 23.39A11.1 11.1 0 1 1 23.46 15.41M12.6 2V15.5M3.6 7Q12.6 11.4 21.6 7M3.6 19.3Q6.5 17.5 9.7 17.2" fill="none" stroke="#1f72bd" stroke-width="1.2"/><path d="M16.6 17.4H14.2A4 4 0 0 0 14.2 25.4H16.6M20.3 17.4H23A4 4 0 0 1 23 25.4H20.3M16.1 21.4H20.8" fill="none" stroke="#4f5a62" stroke-width="1.3"/></svg>
<svg class="a" style="left:200px;top:585px;" width="24" height="30" viewBox="0 0 24 30"><path d="M2.5 1H15L22.6 9V27Q22.6 28.5 21 28.5H2.5Q1 28.5 1 27V2.5Q1 1 2.5 1Z" fill="#fff" stroke="#8a9094" stroke-width="1.1"/><path d="M15 1V9H22.6Z" fill="#9aa0a3"/><rect x="3.3" y="3.2" width="11.5" height="5.2" rx="1.6" fill="#fde3c8" stroke="#f7891f" stroke-width="1.1"/><rect x="3.3" y="21.4" width="17.4" height="5.2" rx="1.6" fill="#fde3c8" stroke="#f7891f" stroke-width="1.1"/></svg>
<svg class="a" style="left:198px;top:643px;" width="27" height="28" viewBox="0 0 27 28"><path d="M3 1.4H23.3Q25.4 1.4 25.4 3.5V14.9Q25.4 17 23.3 17H19.4V25.9L11 17H3Q1 17 1 14.9V3.5Q1 1.4 3 1.4Z" fill="#fde3c8" stroke="#f7891f" stroke-width="1.2"/></svg>
<!--ANNOTATION-->
<div class="a" style="left:174px;top:201px;width:219.5px;height:61.5px;background:#fff"></div>
<div class="a" style="left:178.2px;top:205.2px;width:211px;height:53.3px;border:9px solid #e94b4a"></div>
<div class="t" style="left:246.6px;top:222.00px;font-size:17.5px;color:#262626;transform:scaleX(0.9442);transform-origin:0 0;">Picture...</div>
<svg class="a" style="left:199px;top:218px;" width="25" height="23" viewBox="0 0 25 23"><rect x="0.7" y="0.7" width="23.6" height="21.6" rx="2" fill="#fff" stroke="#3d4b55" stroke-width="1.3"/><path d="M2 7.2C9 7.2 15.5 13 15.2 21H2Z" fill="#28a0d8"/><path d="M14 13.5C15.5 11.8 18 11.8 22.8 12.5V21H15.2C15.2 18 14.8 15.5 14 13.5Z" fill="#88c6de"/><circle cx="17.5" cy="5.4" r="2.5" fill="#f7891f"/></svg>
<svg class="a" style="left:0px;top:180px;" width="200" height="90" viewBox="0 0 200 90"><path d="M34.3 47L121.7 35.4L114.9 21.8L162 49.4L114.3 75.7L120.5 62.1Z" fill="#fff" stroke="#fff" stroke-width="9" stroke-linejoin="round"/><path d="M34.3 47L121.7 35.4L114.9 21.8L162 49.4L114.3 75.7L120.5 62.1Z" fill="#e94b4a"/></svg>
</body></html>
